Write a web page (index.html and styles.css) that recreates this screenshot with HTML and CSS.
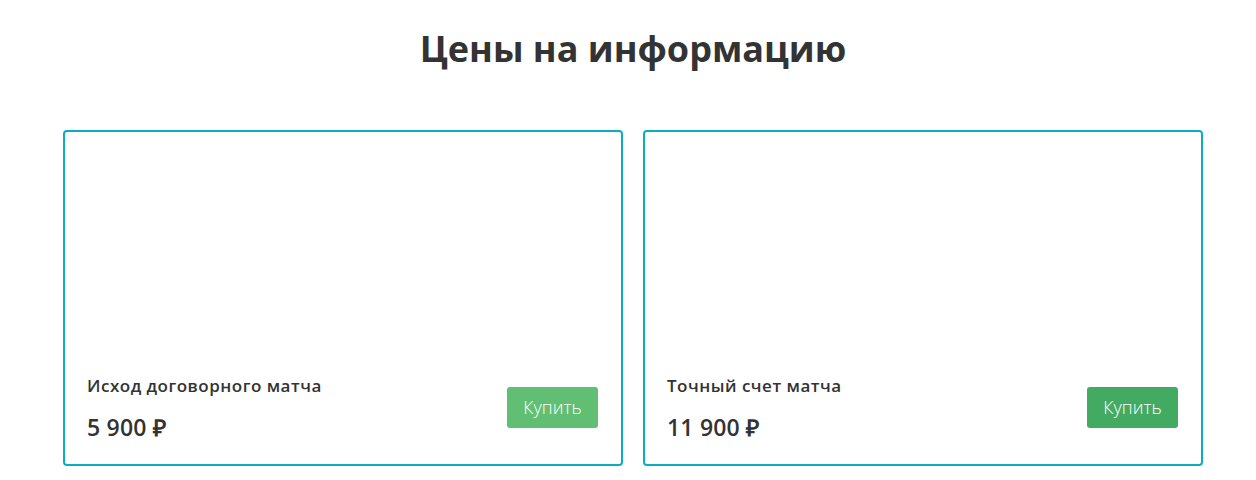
FILE: index.html
```html
<!DOCTYPE html>
<html lang="ru">
<head>
    <meta charset="UTF-8">
    <title>Цены на информацию</title>
    <link rel="stylesheet" href="styles.css">
</head>
<body>
<div class="prices">
    <h2 class="prices-title">Цены на информацию</h2>
    <div class="prices-list">
        <div class="price-card">
            <div class="price-info">
                <div class="price-name">Исход договорного матча</div>
                <div class="price-value">5 900 ₽</div>
            </div>
            <a href="javascript:" class="buy-btn buy-btn-light">Купить</a>
        </div>
        <div class="price-card">
            <div class="price-info">
                <div class="price-name">Точный счет матча</div>
                <div class="price-value">11 900 ₽</div>
            </div>
            <a href="javascript:" class="buy-btn">Купить</a>
        </div>
    </div>
</div>
</body>
</html>
```

FILE: styles.css
```css
* {
    margin: 0;
    padding: 0;
    box-sizing: border-box;
    text-decoration: none;
}

body {
    font-family: "Open Sans", "Liberation Sans", sans-serif;
    color: #333;
    background: #fff;
}

.prices {
    width: 1140px;
    margin-left: 63px;
    padding-top: 24px;
}

.prices-title {
    font-size: 36px;
    font-weight: 700;
    line-height: 50px;
    text-align: center;
    color: #333;
}

.prices-list {
    display: flex;
    gap: 20px;
    margin-top: 56px;
}

.price-card {
    flex: 1;
    height: 336px;
    display: flex;
    align-items: flex-end;
    justify-content: space-between;
    padding: 0 23px 22px 22px;
    border: 2px solid #0aadc2;
    border-radius: 4px;
}

.price-card .buy-btn {
    margin-bottom: 14px;
}

.price-name {
    font-size: 17px;
    font-weight: 600;
    line-height: 24px;
    letter-spacing: 0.5px;
}

.price-value {
    margin-top: 14px;
    font-size: 23px;
    font-weight: 600;
    line-height: 30px;
    letter-spacing: 0.2px;
}

.buy-btn {
    display: block;
    width: 91px;
    height: 41px;
    font-size: 18px;
    font-weight: 300;
    line-height: 41px;
    text-align: center;
    color: #fff;
    background: #43aa62;
    border-radius: 3px;
}

.buy-btn-light {
    background: #60bf72;
}
```
